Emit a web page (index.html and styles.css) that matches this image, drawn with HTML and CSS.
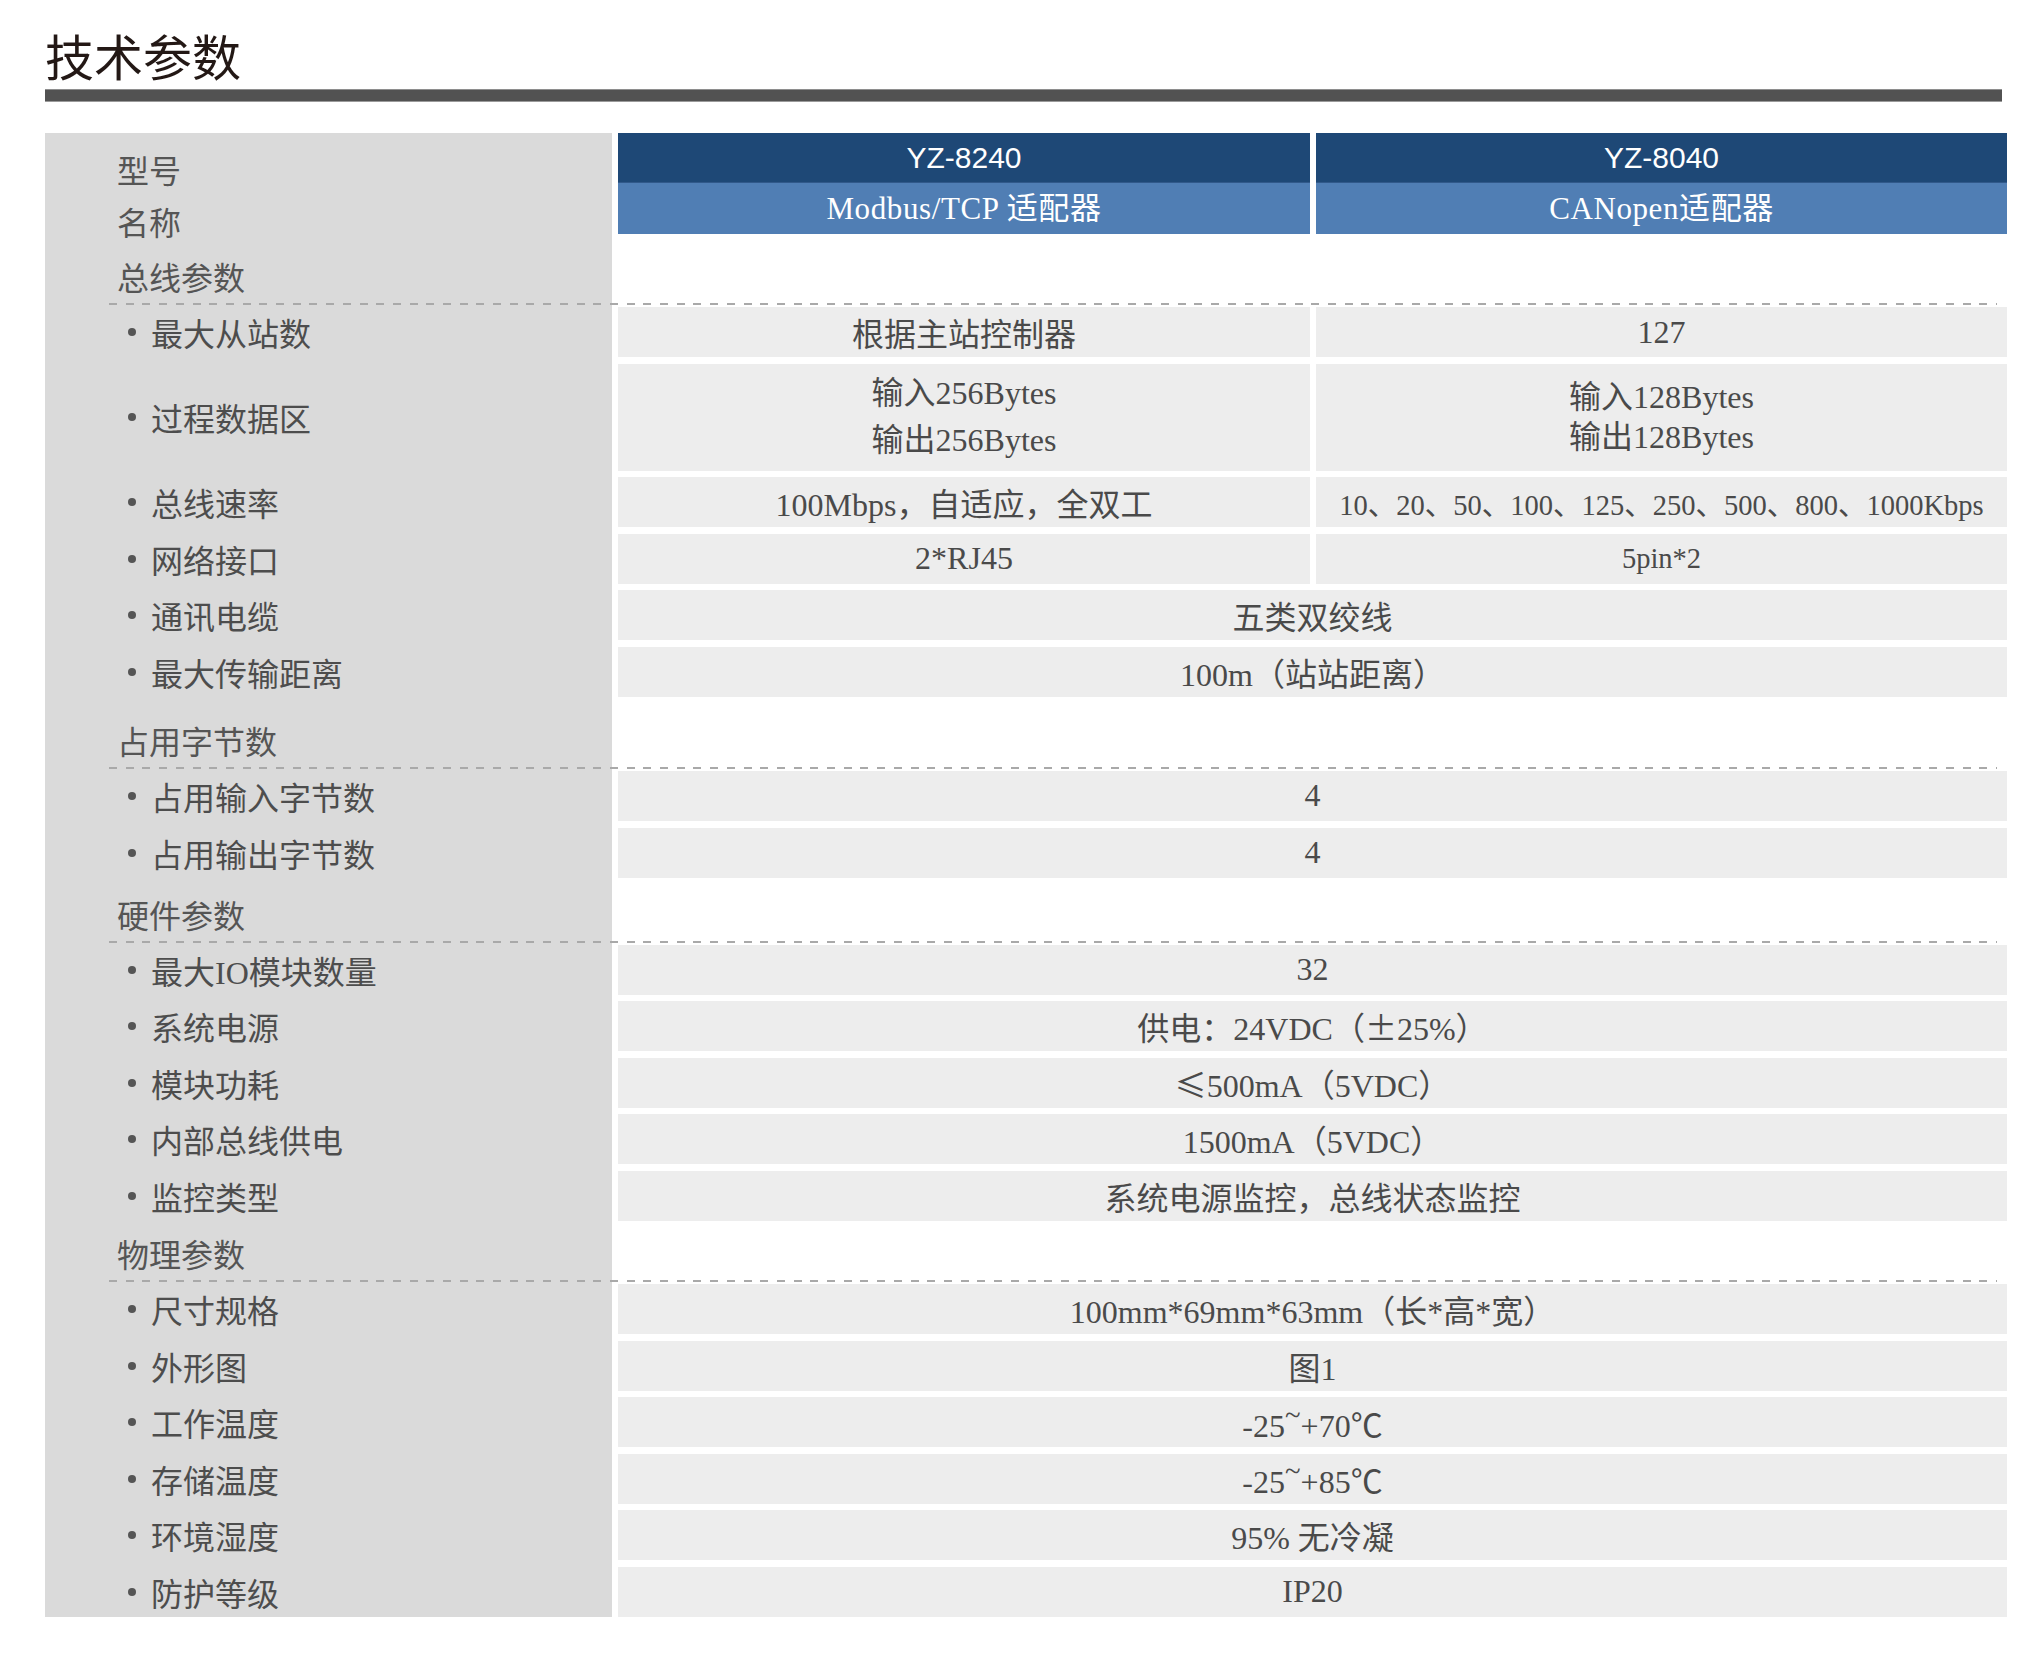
FILE: index.html
```html
<!DOCTYPE html>
<html lang="zh-CN">
<head>
<meta charset="utf-8">
<title>技术参数</title>
<link rel="stylesheet" href="styles.css">
</head>
<body>
<div class="sheet">
  <h1 class="title">技术参数</h1>
  <div class="rule"></div>

  <div class="spec">
    <div class="row row-head">
      <div class="lab-head"><div>型号</div><div>名称</div></div>
      <div class="prod"><div class="model">YZ-8240</div><div class="pname">Modbus/TCP 适配器</div></div>
      <div class="prod"><div class="model">YZ-8040</div><div class="pname">CANopen适配器</div></div>
    </div>

    <div class="sec sec-1"><span>总线参数</span></div>
    <div class="dash"></div>
    <div class="row"><div class="lab">最大从站数</div><div class="val">根据主站控制器</div><div class="val">127</div></div>
    <div class="row double"><div class="lab">过程数据区</div><div class="val lines-47"><div>输入256Bytes<br>输出256Bytes</div></div><div class="val lines-40"><div>输入128Bytes<br>输出128Bytes</div></div></div>
    <div class="row"><div class="lab">总线速率</div><div class="val">100Mbps，自适应，全双工</div><div class="val small">10、20、50、100、125、250、500、800、1000Kbps</div></div>
    <div class="row"><div class="lab">网络接口</div><div class="val">2*RJ45</div><div class="val small">5pin*2</div></div>
    <div class="row"><div class="lab">通讯电缆</div><div class="val span">五类双绞线</div></div>
    <div class="row"><div class="lab">最大传输距离</div><div class="val span">100m（站站距离）</div></div>

    <div class="sec sec-2"><span>占用字节数</span></div>
    <div class="dash"></div>
    <div class="row"><div class="lab">占用输入字节数</div><div class="val span">4</div></div>
    <div class="row"><div class="lab">占用输出字节数</div><div class="val span">4</div></div>

    <div class="sec sec-3"><span>硬件参数</span></div>
    <div class="dash"></div>
    <div class="row"><div class="lab">最大IO模块数量</div><div class="val span">32</div></div>
    <div class="row"><div class="lab">系统电源</div><div class="val span"><span>供电：24VDC（<span class="cjk">±</span>25%）</span></div></div>
    <div class="row"><div class="lab">模块功耗</div><div class="val span"><span><span class="cjk">≤</span>500mA（5VDC）</span></div></div>
    <div class="row"><div class="lab">内部总线供电</div><div class="val span">1500mA（5VDC）</div></div>
    <div class="row"><div class="lab">监控类型</div><div class="val span">系统电源监控，总线状态监控</div></div>

    <div class="sec sec-4"><span>物理参数</span></div>
    <div class="dash"></div>
    <div class="row"><div class="lab">尺寸规格</div><div class="val span">100mm*69mm*63mm（长*高*宽）</div></div>
    <div class="row"><div class="lab">外形图</div><div class="val span">图1</div></div>
    <div class="row"><div class="lab">工作温度</div><div class="val span"><span>-25<span class="tilde">~</span>+70℃</span></div></div>
    <div class="row"><div class="lab">存储温度</div><div class="val span"><span>-25<span class="tilde">~</span>+85℃</span></div></div>
    <div class="row"><div class="lab">环境湿度</div><div class="val span">95% 无冷凝</div></div>
    <div class="row"><div class="lab">防护等级</div><div class="val span">IP20</div></div>
  </div>
</div>
</body>
</html>
```

FILE: styles.css
```css
html, body {
  margin: 0;
  padding: 0;
  background: #ffffff;
}

body {
  font-family: "Liberation Serif", "Noto Sans CJK SC", serif;
  color: #4a4a4a;
}

.sheet {
  margin-left: 45px;
  width: 1962px;
}

.title {
  margin: 0;
  padding-top: 25px;
  height: 60px;
  line-height: 60px;
  font-family: "Noto Sans CJK SC", sans-serif;
  font-size: 49px;
  font-weight: 400;
  color: #231815;
}

.rule {
  margin-top: 4px;
  width: 1957px;
  height: 11px;
  background: #525252;
  border-top: 1px solid #8e8e8e;
  border-bottom: 1px solid #9a9a9a;
  box-sizing: content-box;
}

.spec {
  margin-top: 31px;
  background-image: linear-gradient(#dadada, #dadada);
  background-repeat: no-repeat;
  background-position: 0 0;
  background-size: 567px 100%;
  font-size: 32px;
}

.row {
  display: grid;
  grid-template-columns: 567px 692px 691px;
  column-gap: 6px;
  height: 50px;
}

.row + .row {
  margin-top: 6.6px;
}

.dash + .row {
  margin-top: 2px;
}

.row.double {
  height: 107px;
}

.row-head {
  height: 101px;
}

.lab-head {
  padding-top: 10px;
  padding-left: 72px;
  line-height: 52px;
  font-family: "Noto Sans CJK SC", sans-serif;
  color: #555555;
}

.prod {
  display: flex;
  flex-direction: column;
}

.model {
  height: 50px;
  line-height: 50px;
  background: #1e4876;
  border-bottom: 1px solid #31598a;
  box-sizing: border-box;
  color: #ffffff;
  text-align: center;
  font-family: "Liberation Sans", "Noto Sans CJK SC", sans-serif;
  font-size: 30px;
}

.pname {
  height: 51px;
  line-height: 51px;
  background: #507eb4;
  color: #ffffff;
  text-align: center;
  font-size: 31px;
  letter-spacing: 0.6px;
}

.sec {
  display: flex;
  align-items: flex-end;
  padding-left: 72px;
  padding-bottom: 7px;
  box-sizing: border-box;
  line-height: 40px;
  font-family: "Noto Sans CJK SC", sans-serif;
  color: #555555;
}

.sec-1 { height: 69px; }
.sec-2 { height: 70px; }
.sec-3 { height: 63px; }
.sec-4 { height: 59px; }

.dash {
  margin-left: 64px;
  margin-right: 10px;
  height: 2px;
  background-image: repeating-linear-gradient(to right, #a9a9a9 0, #a9a9a9 8px, transparent 8px, transparent 16.7px);
}

.lab {
  display: flex;
  align-items: center;
  padding-left: 83px;
  font-family: "Liberation Serif", "Noto Sans CJK SC", serif;
  color: #4d4d4d;
}

.lab::before {
  content: "";
  width: 8px;
  height: 8px;
  border-radius: 50%;
  background: #555555;
  margin-right: 15px;
  flex: none;
}

.val {
  display: flex;
  align-items: center;
  justify-content: center;
  text-align: center;
  background: #ededed;
  color: #4a4a4a;
  white-space: nowrap;
}

.val.span {
  grid-column: 2 / 4;
}

.val.small {
  font-size: 28.5px;
}

.lines-47 {
  line-height: 47px;
}

.lines-40 {
  line-height: 40px;
}

.cjk {
  font-family: "Noto Sans CJK SC", sans-serif;
}

.tilde {
  vertical-align: 0.4em;
  font-size: 0.9em;
}
```
